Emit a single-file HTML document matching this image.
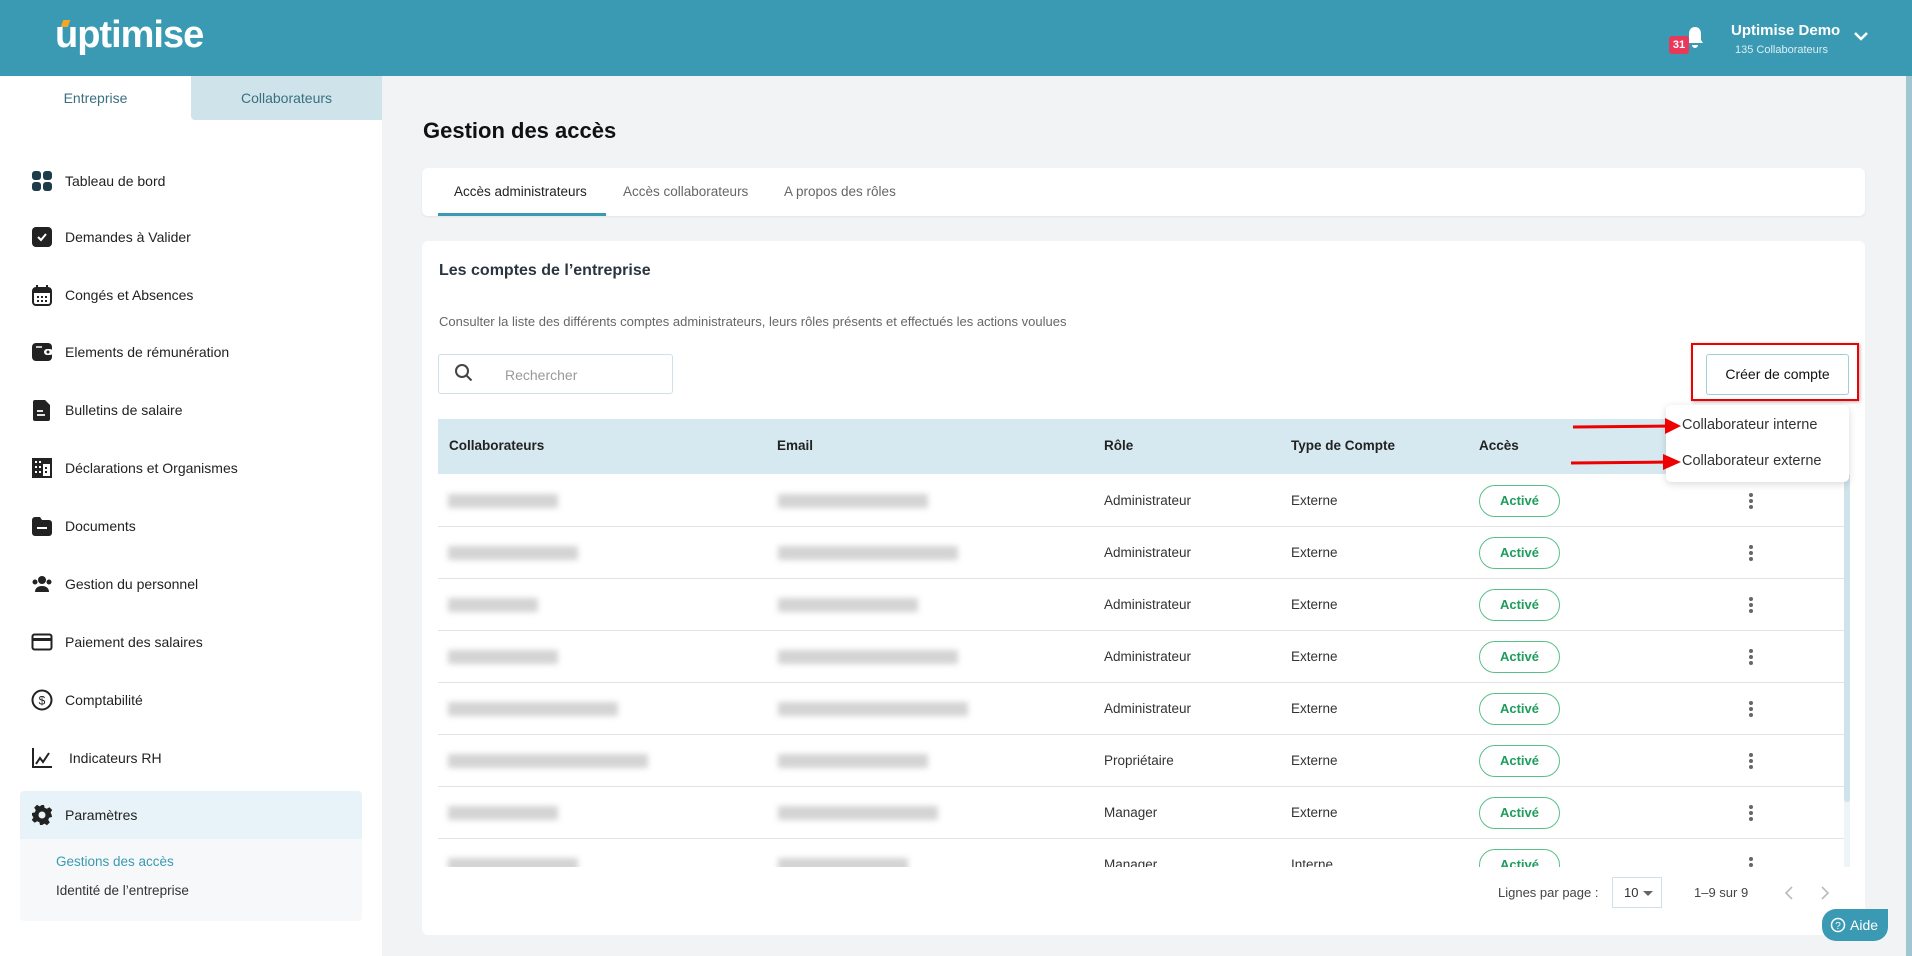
<!DOCTYPE html>
<html><head><meta charset="utf-8"><style>
*{box-sizing:border-box;margin:0;padding:0}
body{width:1912px;height:956px;overflow:hidden;background:#f2f3f5;font-family:"Liberation Sans",sans-serif;position:relative;color:#222}
.abs{position:absolute}
.hdr{left:0;top:0;width:1912px;height:76px;background:#3a9ab3}
.side{left:0;top:76px;width:382px;height:880px;background:#fff}
.mi{position:absolute;left:31px;font-size:14px;color:#222;display:flex;align-items:center;gap:12px}
.mi svg{width:22px;height:22px}
.card{background:#fff;border-radius:6px}
.blur{position:absolute;height:14px;background:#c9c9c9;filter:blur(3px);opacity:.8}
.row{position:absolute;left:438px;width:1406px;height:52px;border-bottom:1px solid #e3e3e3;font-size:13.5px;color:#333}
.row span{position:absolute;top:18px}
.pill{position:absolute;left:1041px;top:10px;width:81px;height:32px;border:1.5px solid #5ac08a;border-radius:16px;color:#1f9d5c;font-weight:bold;font-size:13px;text-align:center;line-height:29px}
.dots{position:absolute;left:1311px;top:18px;width:4px}
.dots i{display:block;width:4px;height:4px;border-radius:2px;background:#666;margin-bottom:2px}
</style></head><body>
<div class="abs hdr"></div>
<div class="abs" style="left:55px;top:14px;color:#fff;font-size:38px;font-weight:bold;letter-spacing:-1px">uptimise</div>
<div class="abs" style="left:62px;top:20px;width:7px;height:7px;background:#f5a623;transform:skew(-20deg)"></div>
<svg class="abs" style="left:1683px;top:25px" width="24" height="26" viewBox="0 0 24 26"><path d="M12 2c-4 0-6 3-6 7v6l-2 3h16l-2-3V9c0-4-2-7-6-7zM9 20a3 3 0 006 0z" fill="#fff"/></svg>
<div class="abs" style="left:1669px;top:36px;width:20px;height:18px;background:#e8395a;border-radius:3px;color:#fff;font-size:11px;font-weight:bold;text-align:center;line-height:18px">31</div>
<div class="abs" style="left:1731px;top:22px;color:#fff;font-weight:bold;font-size:15px">Uptimise Demo</div>
<div class="abs" style="left:1735px;top:44px;color:#dbeef3;font-size:11px">135 Collaborateurs</div>
<svg class="abs" style="left:1853px;top:30px" width="16" height="12"><path d="M2 3l6 6 6-6" stroke="#fff" stroke-width="2.5" fill="none"/></svg>

<div class="abs side"></div>
<div class="abs" style="left:0;top:76px;width:191px;height:44px;text-align:center;line-height:44px;font-size:14px;color:#3a6f80">Entreprise</div>
<div class="abs" style="left:191px;top:76px;width:191px;height:44px;background:#cfe4ea;text-align:center;line-height:44px;font-size:14px;color:#3a6f80;border-radius:0 0 0 4px">Collaborateurs</div>

<div class="mi" style="top:170px"><svg viewBox="0 0 22 22"><rect x="1" y="1" width="9" height="9" rx="3" fill="#1d3d4a"/><rect x="12" y="1" width="9" height="9" rx="3" fill="#1d3d4a"/><rect x="1" y="12" width="9" height="9" rx="3" fill="#1d3d4a"/><rect x="12" y="12" width="9" height="9" rx="3" fill="#1d3d4a"/></svg>Tableau de bord</div>
<div class="mi" style="top:226px"><svg viewBox="0 0 22 22"><rect x="1" y="1" width="20" height="20" rx="4" fill="#222"/><path d="M7 11l3 3 5-6" stroke="#fff" stroke-width="2" fill="none"/></svg>Demandes à Valider</div>
<div class="mi" style="top:284px"><svg viewBox="0 0 22 22"><rect x="2" y="4" width="18" height="17" rx="3" fill="none" stroke="#222" stroke-width="2"/><rect x="2" y="4" width="18" height="5" fill="#222"/><path d="M6 1v5M16 1v5" stroke="#222" stroke-width="2"/><g fill="#222"><rect x="6" y="12" width="2" height="2"/><rect x="10" y="12" width="2" height="2"/><rect x="14" y="12" width="2" height="2"/><rect x="6" y="16" width="2" height="2"/><rect x="10" y="16" width="2" height="2"/><rect x="14" y="16" width="2" height="2"/></g></svg>Congés et Absences</div>
<div class="mi" style="top:341px"><svg viewBox="0 0 22 22"><rect x="1" y="2" width="20" height="18" rx="4" fill="#222"/><rect x="13" y="8" width="9" height="6" rx="3" fill="#fff"/><circle cx="17" cy="11" r="1.5" fill="#222"/><path d="M5 6h6" stroke="#fff" stroke-width="1.5"/></svg>Elements de rémunération</div>
<div class="mi" style="top:399px"><svg viewBox="0 0 22 22"><path d="M4 1h10l5 5v14a2 2 0 01-2 2H4a2 2 0 01-2-2V3a2 2 0 012-2z" fill="#222"/><path d="M6 12h6M6 16h8" stroke="#fff" stroke-width="1.8"/></svg>Bulletins de salaire</div>
<div class="mi" style="top:457px"><svg viewBox="0 0 22 22"><rect x="1" y="1" width="20" height="20" fill="#222"/><g fill="#fff"><rect x="4" y="4" width="2" height="2"/><rect x="8" y="4" width="2" height="2"/><rect x="4" y="9" width="2" height="2"/><rect x="8" y="9" width="2" height="2"/><rect x="4" y="14" width="2" height="2"/><rect x="8" y="14" width="2" height="2"/><rect x="12" y="7" width="7" height="12"/></g><rect x="14" y="10" width="2" height="2" fill="#222"/><rect x="14" y="14" width="2" height="2" fill="#222"/></svg>Déclarations et Organismes</div>
<div class="mi" style="top:515px"><svg viewBox="0 0 22 22"><path d="M1 5a3 3 0 013-3h5l2 3h7a3 3 0 013 3v10a3 3 0 01-3 3H4a3 3 0 01-3-3z" fill="#222"/><path d="M6 13h10" stroke="#fff" stroke-width="2"/></svg>Documents</div>
<div class="mi" style="top:573px"><svg viewBox="0 0 22 22"><circle cx="11" cy="7" r="4" fill="#222"/><path d="M4 19c0-4 3-6 7-6s7 2 7 6z" fill="#222"/><circle cx="4" cy="9" r="2.5" fill="#222"/><circle cx="18" cy="9" r="2.5" fill="#222"/></svg>Gestion du personnel</div>
<div class="mi" style="top:631px"><svg viewBox="0 0 22 22"><rect x="1.5" y="3.5" width="19" height="15" rx="2" fill="none" stroke="#222" stroke-width="2"/><rect x="2" y="7" width="18" height="3" fill="#222"/></svg>Paiement des salaires</div>
<div class="mi" style="top:689px"><svg viewBox="0 0 22 22"><circle cx="11" cy="11" r="9.5" fill="none" stroke="#222" stroke-width="2"/><text x="11" y="15.5" font-size="12" text-anchor="middle" font-family="Liberation Sans" fill="#222">$</text></svg>Comptabilité</div>
<div class="mi" style="top:747px;gap:16px"><svg viewBox="0 0 22 22"><path d="M2 1v19h19" stroke="#222" stroke-width="2" fill="none"/><path d="M5 17l4-6 3 4 6-9" stroke="#222" stroke-width="2" fill="none"/></svg>Indicateurs RH</div>
<div class="abs" style="left:20px;top:791px;width:342px;height:130px;background:#f6f8fa;border-radius:4px"></div>
<div class="abs" style="left:20px;top:791px;width:342px;height:48px;background:#e7f3f8;border-radius:4px 4px 0 0"></div>
<div class="mi" style="top:804px"><svg viewBox="0 0 22 22"><path d="M9 1h4l.6 2.8 2.3 1 2.5-1.6 2.8 2.8-1.6 2.5 1 2.3L21 13v-4 4l-2.8.6-1 2.3 1.6 2.5-2.8 2.8-2.5-1.6-2.3 1L13 21H9l-.6-2.8-2.3-1-2.5 1.6-2.8-2.8 1.6-2.5-1-2.3L1 13V9l2.8-.6 1-2.3-1.6-2.5 2.8-2.8 2.5 1.6 2.3-1z" fill="#222"/><circle cx="11" cy="11" r="3.5" fill="#e7f3f8"/></svg>Paramètres</div>
<div class="abs" style="left:56px;top:854px;font-size:13.5px;color:#3a9ab3">Gestions des accès</div>
<div class="abs" style="left:56px;top:883px;font-size:13.5px;color:#333">Identité de l’entreprise</div>

<div class="abs" style="left:423px;top:118px;font-size:22px;font-weight:bold;color:#111">Gestion des accès</div>
<div class="abs card" style="left:422px;top:168px;width:1443px;height:48px;box-shadow:0 1px 2px #e0e6ea"></div>
<div class="abs" style="left:454px;top:184px;font-size:13.5px;color:#222">Accès administrateurs</div>
<div class="abs" style="left:438px;top:213px;width:168px;height:3px;background:#3a9ab3"></div>
<div class="abs" style="left:623px;top:184px;font-size:13.5px;color:#666">Accès collaborateurs</div>
<div class="abs" style="left:784px;top:184px;font-size:13.5px;color:#666">A propos des rôles</div>

<div class="abs card" style="left:422px;top:241px;width:1443px;height:694px"></div>
<div class="abs" style="left:439px;top:262px;font-size:16px;font-weight:bold;color:#2a3540">Les comptes de l’entreprise</div>
<div class="abs" style="left:439px;top:314px;font-size:13px;color:#666">Consulter la liste des différents comptes administrateurs, leurs rôles présents et effectués les actions voulues</div>
<div class="abs" style="left:438px;top:354px;width:235px;height:40px;border:1px solid #cfe0e6;border-radius:3px"></div>
<svg class="abs" style="left:454px;top:363px" width="20" height="20"><circle cx="8" cy="8" r="6" stroke="#444" stroke-width="2" fill="none"/><path d="M12.5 12.5l5 5" stroke="#444" stroke-width="2"/></svg>
<div class="abs" style="left:505px;top:367px;font-size:14px;color:#999">Rechercher</div>

<div class="abs" style="left:1691px;top:343px;width:168px;height:58px;border:2px solid #e00;box-shadow:1px 1px 3px rgba(0,0,0,.3)"></div>
<div class="abs" style="left:1706px;top:354px;width:143px;height:41px;border:1px solid #9fcfda;border-radius:3px;text-align:center;line-height:39px;font-size:14px;color:#111">Créer de compte</div>

<div class="abs" style="left:438px;top:419px;width:1409px;height:55px;background:#d6e9f0"></div>
<div class="abs" style="top:438px;left:449px;font-size:13.5px;font-weight:bold;color:#222">Collaborateurs</div>
<div class="abs" style="top:438px;left:777px;font-size:13.5px;font-weight:bold;color:#222">Email</div>
<div class="abs" style="top:438px;left:1104px;font-size:13.5px;font-weight:bold;color:#222">Rôle</div>
<div class="abs" style="top:438px;left:1291px;font-size:13.5px;font-weight:bold;color:#222">Type de Compte</div>
<div class="abs" style="top:438px;left:1479px;font-size:13.5px;font-weight:bold;color:#222">Accès</div>

<div class="abs" style="left:438px;top:474px;width:1409px;height:393px;overflow:hidden">
<div style="position:relative;left:-438px;top:-474px">
<div class="row" style="top:475px"><span style="left:666px">Administrateur</span><span style="left:853px">Externe</span><div class="pill">Activé</div><div class="dots"><i></i><i></i><i></i></div></div>
<div class="row" style="top:527px"><span style="left:666px">Administrateur</span><span style="left:853px">Externe</span><div class="pill">Activé</div><div class="dots"><i></i><i></i><i></i></div></div>
<div class="row" style="top:579px"><span style="left:666px">Administrateur</span><span style="left:853px">Externe</span><div class="pill">Activé</div><div class="dots"><i></i><i></i><i></i></div></div>
<div class="row" style="top:631px"><span style="left:666px">Administrateur</span><span style="left:853px">Externe</span><div class="pill">Activé</div><div class="dots"><i></i><i></i><i></i></div></div>
<div class="row" style="top:683px"><span style="left:666px">Administrateur</span><span style="left:853px">Externe</span><div class="pill">Activé</div><div class="dots"><i></i><i></i><i></i></div></div>
<div class="row" style="top:735px"><span style="left:666px">Propriétaire</span><span style="left:853px">Externe</span><div class="pill">Activé</div><div class="dots"><i></i><i></i><i></i></div></div>
<div class="row" style="top:787px"><span style="left:666px">Manager</span><span style="left:853px">Externe</span><div class="pill">Activé</div><div class="dots"><i></i><i></i><i></i></div></div>
<div class="row" style="top:839px"><span style="left:666px">Manager</span><span style="left:853px">Interne</span><div class="pill">Activé</div><div class="dots"><i></i><i></i><i></i></div></div>
<div class="blur" style="left:448px;top:494px;width:110px"></div><div class="blur" style="left:778px;top:494px;width:150px"></div>
<div class="blur" style="left:448px;top:546px;width:130px"></div><div class="blur" style="left:778px;top:546px;width:180px"></div>
<div class="blur" style="left:448px;top:598px;width:90px"></div><div class="blur" style="left:778px;top:598px;width:140px"></div>
<div class="blur" style="left:448px;top:650px;width:110px"></div><div class="blur" style="left:778px;top:650px;width:180px"></div>
<div class="blur" style="left:448px;top:702px;width:170px"></div><div class="blur" style="left:778px;top:702px;width:190px"></div>
<div class="blur" style="left:448px;top:754px;width:200px"></div><div class="blur" style="left:778px;top:754px;width:150px"></div>
<div class="blur" style="left:448px;top:806px;width:110px"></div><div class="blur" style="left:778px;top:806px;width:160px"></div>
<div class="blur" style="left:448px;top:858px;width:130px"></div><div class="blur" style="left:778px;top:858px;width:130px"></div>
</div></div>
<div class="abs" style="left:1844px;top:474px;width:6px;height:393px;background:#eef5f8"></div>
<div class="abs" style="left:1844px;top:474px;width:6px;height:328px;background:#cfe3ea;border-radius:3px"></div>

<div class="abs" style="left:1666px;top:405px;width:183px;height:77px;background:#fff;border-radius:5px;box-shadow:0 2px 8px rgba(0,0,0,.15)"></div>
<div class="abs" style="left:1682px;top:417px;font-size:14.5px;color:#333">Collaborateur interne</div>
<div class="abs" style="left:1682px;top:453px;font-size:14.5px;color:#333">Collaborateur externe</div>
<svg class="abs" style="left:1565px;top:410px" width="125" height="65"><path d="M8 17l100-1" stroke="#e00" stroke-width="3"/><path d="M100 8l16 8-16 8z" fill="#e00"/><path d="M6 53l100-1" stroke="#e00" stroke-width="3"/><path d="M98 44l18 8-18 8z" fill="#e00"/></svg>

<div class="abs" style="left:1498px;top:885px;font-size:13px;color:#444">Lignes par page :</div>
<div class="abs" style="left:1612px;top:877px;width:50px;height:31px;border:1px solid #cfe0e6"></div>
<div class="abs" style="left:1624px;top:885px;font-size:13px;color:#333">10</div>
<div class="abs" style="left:1643px;top:891px;border:5px solid transparent;border-top:5px solid #666"></div>
<div class="abs" style="left:1694px;top:885px;font-size:13px;color:#444">1–9 sur 9</div>
<svg class="abs" style="left:1783px;top:885px" width="50" height="16"><path d="M9 2l-6 6 6 6M39 2l6 6-6 6" stroke="#bbb" stroke-width="1.6" fill="none"/></svg>

<div class="abs" style="left:1822px;top:909px;width:66px;height:32px;background:#3a9ab3;border-radius:14px 0 14px 14px;color:#fff;font-size:14px;line-height:32px;padding-left:28px">Aide</div>
<svg class="abs" style="left:1830px;top:917px" width="16" height="16"><circle cx="8" cy="8" r="6.5" stroke="#fff" stroke-width="1.5" fill="none"/><text x="8" y="12" font-size="10" text-anchor="middle" fill="#fff" font-family="Liberation Sans">?</text></svg>
<div class="abs" style="left:1906px;top:76px;width:6px;height:880px;background:#a0c6d0"></div>
</body></html>
